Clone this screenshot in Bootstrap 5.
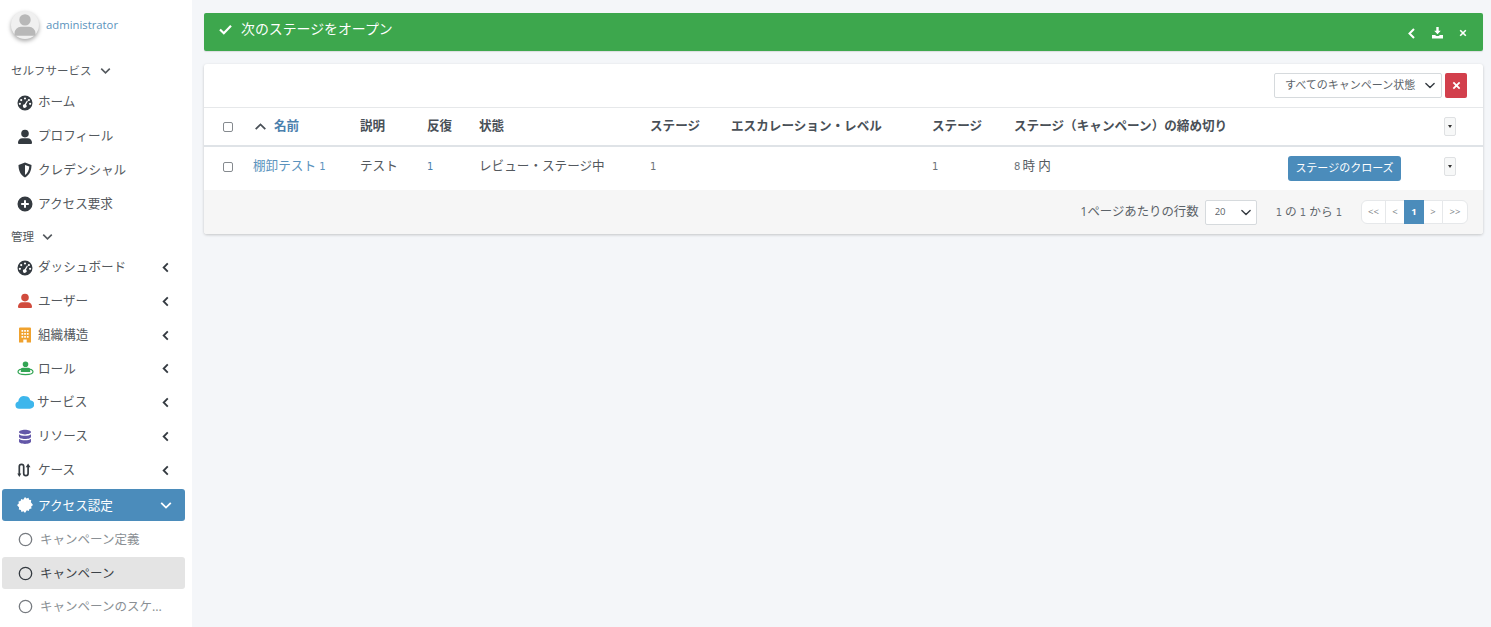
<!DOCTYPE html>
<html lang="ja">
<head>
<meta charset="utf-8">
<title>キャンペーン</title>
<link href="https://cdn.jsdelivr.net/npm/bootstrap@5.3.0/dist/css/bootstrap.min.css" rel="stylesheet">
<style>
html,body{height:627px;overflow:hidden}
body{background:#f4f6f9;color:#495057;font-family:"Open Sans","Noto Sans CJK JP",sans-serif;font-size:13px}
.shell{height:627px}
.side{width:192px;flex:none;background:#fff;overflow:hidden;height:627px}
.userbox{height:50px;padding:0 0 0 11px;gap:7px}
.avatar{width:28px;height:28px;border-radius:50%;background:#f0f0f0;box-shadow:0 2px 4px rgba(0,0,0,.35);flex:none}
.uname{color:#5b93bd;font-size:11.3px}
.sec{height:34px;padding:2px 0 0 11px;font-size:11.5px;color:#54595e;gap:8px}
.sec1{margin-top:4px;height:32px}
.sec2{height:29.5px;margin-top:0}
.mi{height:33.8px;padding:0 20px 0 18px;margin-right:7px;color:#54595e;font-size:12.6px}
.mi .ico{width:16px;height:16px;flex:none;margin:0 5px 0 -1px;color:#343a40}
.mi .ico-wide{width:19px;height:16px;margin:0 3px 0 -3px}
.mi .ico-role{width:17px;height:15px;margin:0 4px 0 -1px}
.mi .lbl{flex:1;white-space:nowrap}
.mi .chev{width:9px;height:11px;flex:none;margin-right:-5px;color:#343a40}
.mi-act{background:#4b8cbb;color:#fff;height:32px;margin:2px 7px 1px 2px;padding:0 13px 0 16px;border-radius:3px}
.mi-act .lbl{padding-top:2px}
.mi-act .ico{color:#fff}
.mi-act .chev{color:#fff;width:12px;height:9px;margin:0}
.mi-sub{padding-left:18px;color:#8a8f94;height:34px;font-size:12.5px}
.mi-sub .lbl{padding-top:3px}
.mi-sub .ico{width:15px;height:15px;margin:0 7px 0 0;color:#777b80}
.mi-cur{background:#e4e4e4;color:#3c4248;height:32px;margin:1px 7px 0 2px;padding-left:16px;border-radius:3px}
.mi-cur .ico{color:#343a40}
.mainpane{flex:1;padding:13px 8px 0 12px;min-width:0}
.banner{background:#3da74d;color:#fff;height:38px;border-radius:2px;padding:0 16px 6px 15px;font-size:13.9px;box-shadow:0 1px 1px rgba(0,0,0,.1)}
.banner .ck{width:13px;height:11px;margin-right:9px}
.tools{gap:15px;margin-top:8px}
.panel{background:#fff;border-radius:3px;margin-top:13px;box-shadow:0 1px 3px rgba(0,0,0,.2);overflow:hidden}
.tbar{height:44px;padding:0 16px 0 0;gap:3px;border-bottom:1px solid #e6e8ea}
.fsel{width:168px;height:25px;font-size:11px;padding:0 24px 0 10px;border-radius:2px;border-color:#d6dadd;color:#5c6369;background-position:right 4px center;background-size:14px 11px}
.xbtn{width:22px;height:25px;background:#d23f4c;border-radius:2px;padding:0;border:0}
.dtab{table-layout:fixed;width:1279px;margin:0;font-size:12.6px;color:#495057}
.dtab th{height:38px;padding:0 0 0 8px;border-bottom:2px solid #dfe3e7;font-weight:700;vertical-align:middle;white-space:nowrap;color:#495057}
.dtab td{height:44px;padding:0 0 4px 8px;border:0;vertical-align:middle;white-space:nowrap;color:#54595e}
.dtab .lnk{color:#5b93bd}
.dtab .lnkb{color:#4b80ad}
.dig{font-family:"DejaVu Sans",sans-serif;font-size:10px;color:#6c7278}
.dig-gap{margin-right:2px}
.lnk .dig{color:#5b93bd}
.dtab .lnkb .dig{color:#4b80ad}
.cb{width:10px;height:10px;border:1px solid #858a8f;border-radius:2px;display:block;margin-left:11px}
.cbtn{width:12px;height:19px;background:#f7f8f8;border:1px solid #dfe1e3;border-radius:2px;display:flex;align-items:center;justify-content:center;padding:0}
.cbtn i{border-top:3px solid #333;border-left:2px solid transparent;border-right:2px solid transparent}
.closebtn{background:#4b8cbb;color:#fff;border:0;border-radius:3px;height:25px;width:113px;font-size:11px;padding:0;margin-top:4px}
.pgfoot{height:44px;background:#f6f6f6;padding:0 15px 0 0;font-size:12.4px;color:#5c6369}
.pcount{font-size:11.7px}
.psel{width:52px;height:25px;font-size:9.5px;padding:0 18px 0 9px;border-radius:2px;border-color:#d6dadd;color:#5c6369;background-position:right 3px center;background-size:14px 11px;margin:0 19px 0 6px}
.pgs{margin:0 0 0 19px}
.pgs .page-link{height:24px;padding:0;display:flex;align-items:center;justify-content:center;font-size:9.5px;color:#7a8085;border-color:#e6e8ea;border-radius:0}
.pgs .page-item.active .page-link{background:#4b8cbb;border-color:#4b8cbb;color:#fff;font-weight:700}
</style>
</head>
<body>
<svg width="0" height="0" class="position-absolute">
<defs>
<symbol id="i-gauge" viewBox="0 0 16 16"><path fill-rule="evenodd" fill="currentColor" d="M8 .5a7.5 7.5 0 1 1 0 15 7.5 7.5 0 0 1 0-15ZM8 2.4a1.1 1.1 0 1 0 0 2.2 1.1 1.1 0 0 0 0-2.2ZM4.2 4a1.1 1.1 0 1 0 0 2.2 1.1 1.1 0 0 0 0-2.2ZM2.9 7.7a1.1 1.1 0 1 0 0 2.2 1.1 1.1 0 0 0 0-2.2ZM11.9 4a1.1 1.1 0 1 0 0 2.2 1.1 1.1 0 0 0 0-2.2ZM13.1 7.7a1.1 1.1 0 1 0 0 2.2 1.1 1.1 0 0 0 0-2.2ZM10 5.6 7.6 9.3a1.8 1.8 0 1 0 1.4.5L10.9 6Z"/></symbol>
<symbol id="i-user" viewBox="0 0 16 16"><path fill="currentColor" d="M8 .8a3.800 3.800 0 1 1 0 7.600A3.800 3.800 0 0 1 8 .8ZM5.300 9.200h5.400A4.300 4.300 0 0 1 15 13.500v.6a1 1 0 0 1-1 1H2a1 1 0 0 1-1-1v-.6A4.300 4.300 0 0 1 5.300 9.200Z"/></symbol>
<symbol id="i-shield" viewBox="0 0 16 16"><path fill-rule="evenodd" fill="currentColor" d="M8 .5 14.500 3c0 5.500-2 10-6.500 12.500C3.500 13 1.500 8.500 1.500 3ZM8 3v10c2.600-1.700 4-4.500 4.300-8.500Z"/></symbol>
<symbol id="i-plus" viewBox="0 0 16 16"><path fill-rule="evenodd" fill="currentColor" d="M8 .5a7.500 7.500 0 1 1 0 15 7.500 7.500 0 0 1 0-15ZM7 4.200v2.800H4.200v2H7v2.800h2V9h2.800V7H9V4.200Z"/></symbol>
<symbol id="i-build" viewBox="0 0 16 16"><path fill-rule="evenodd" fill="currentColor" d="M3 .5h10a1 1 0 0 1 1 1v14H9.700v-3H6.300v3H2v-14a1 1 0 0 1 1-1ZM4.500 3v1.700h1.700V3ZM7.200 3v1.700h1.700V3ZM9.900 3v1.700h1.700V3ZM4.500 6v1.700h1.700V6ZM7.200 6v1.700h1.700V6ZM9.900 6v1.700h1.700V6ZM4.500 9v1.700h1.700V9ZM7.200 9v1.700h1.700V9ZM9.900 9v1.700h1.700V9Z"/></symbol>
<symbol id="i-role" viewBox="0 0 18 16"><path fill="currentColor" d="M9 .5a3 3 0 1 1 0 6 3 3 0 0 1 0-6ZM6 7.200h6a2 2 0 0 1 2 2v2.500H4V9.200a2 2 0 0 1 2-2Z"/><ellipse cx="9" cy="11.500" rx="8" ry="3" fill="none" stroke="currentColor" stroke-width="1.300"/></symbol>
<symbol id="i-cloud" viewBox="0 0 20 16"><path fill="currentColor" d="M11 1a5.300 5.300 0 0 1 5 4 4.400 4.400 0 0 1-.4 9H4.300a3.900 3.900 0 0 1-.8-7.700A5.600 5.600 0 0 1 11 1Z"/></symbol>
<symbol id="i-db" viewBox="0 0 16 16"><path fill="currentColor" d="M8 .8c3.300 0 6 1 6 2.300S11.300 5.400 8 5.400 2 4.400 2 3.100 4.700.8 8 .8ZM2 5.200C3.200 6.200 5.500 6.700 8 6.700s4.800-.5 6-1.500v2.600c0 1.300-2.700 2.300-6 2.300s-6-1-6-2.300ZM2 9.700c1.200 1 3.500 1.500 6 1.500s4.800-.5 6-1.500v2.900c0 1.300-2.700 2.400-6 2.400s-6-1.100-6-2.400Z"/></symbol>
<symbol id="i-route" viewBox="0 0 16 16"><path fill="none" stroke="currentColor" stroke-width="1.700" d="M2.300 12V4.500a2.200 2.200 0 0 1 4.400 0v7a2.200 2.200 0 0 0 4.400 0V5"/><path fill="currentColor" d="M2.300 15 .3 11.500h4ZM11.100 1.500 13.500 5.300H8.700Z"/></symbol>
<symbol id="i-cert" viewBox="0 0 16 16"><path fill="currentColor" d="m8 0 1.500 1.400 2-.7.6 2 2.100.4-.3 2.100L16 8l-1.800 1.500.3 2.100-2.100.4-.6 2-2-.7L8 16l-1.500-1.700-2 .7-.6-2-2.100-.4.3-2.100L0 8l1.800-1.500-.3-2.100 2.100-.4.600-2 2 .7Z"/></symbol>
<symbol id="i-ring" viewBox="0 0 16 16"><circle cx="8" cy="8" r="6.600" fill="none" stroke="currentColor" stroke-width="1.400"/></symbol>
<symbol id="i-left" viewBox="0 0 9 12"><path fill="none" stroke="currentColor" stroke-width="2" d="M7 1.500 2.500 6 7 10.500"/></symbol>
<symbol id="i-down" viewBox="0 0 12 9"><path fill="none" stroke="currentColor" stroke-width="1.800" d="M1.200 1.800 6 6.600l4.800-4.800"/></symbol>
<symbol id="i-x" viewBox="0 0 10 10"><path fill="none" stroke="currentColor" stroke-width="2" d="m1.500 1.500 7 7m0-7-7 7"/></symbol>
</defs>
</svg>
<div class="shell d-flex">
<nav class="side">
  <div class="userbox d-flex align-items-center">
    <span class="avatar d-flex align-items-center justify-content-center"><svg width="24" height="24" viewBox="0 0 16 16" style="color:#b8b8b8"><use href="#i-user"/></svg></span>
    <span class="uname">administrator</span>
  </div>
  <div class="sec sec1 d-flex align-items-center">セルフサービス <svg width="11" height="8"><use href="#i-down"/></svg></div>
  <a class="mi d-flex align-items-center text-decoration-none"><svg class="ico"><use href="#i-gauge"/></svg><span class="lbl">ホーム</span></a>
  <a class="mi d-flex align-items-center text-decoration-none"><svg class="ico"><use href="#i-user"/></svg><span class="lbl">プロフィール</span></a>
  <a class="mi d-flex align-items-center text-decoration-none"><svg class="ico"><use href="#i-shield"/></svg><span class="lbl">クレデンシャル</span></a>
  <a class="mi d-flex align-items-center text-decoration-none"><svg class="ico"><use href="#i-plus"/></svg><span class="lbl">アクセス要求</span></a>
  <div class="sec sec2 d-flex align-items-center">管理 <svg width="11" height="8"><use href="#i-down"/></svg></div>
  <a class="mi d-flex align-items-center text-decoration-none"><svg class="ico"><use href="#i-gauge"/></svg><span class="lbl">ダッシュボード</span><svg class="chev"><use href="#i-left"/></svg></a>
  <a class="mi d-flex align-items-center text-decoration-none"><svg class="ico" style="color:#d14b3d"><use href="#i-user"/></svg><span class="lbl">ユーザー</span><svg class="chev"><use href="#i-left"/></svg></a>
  <a class="mi d-flex align-items-center text-decoration-none"><svg class="ico" style="color:#f0a22e"><use href="#i-build"/></svg><span class="lbl">組織構造</span><svg class="chev"><use href="#i-left"/></svg></a>
  <a class="mi d-flex align-items-center text-decoration-none"><svg class="ico ico-role" style="color:#32a554"><use href="#i-role"/></svg><span class="lbl">ロール</span><svg class="chev"><use href="#i-left"/></svg></a>
  <a class="mi d-flex align-items-center text-decoration-none"><svg class="ico ico-wide" style="color:#3db6ec"><use href="#i-cloud"/></svg><span class="lbl">サービス</span><svg class="chev"><use href="#i-left"/></svg></a>
  <a class="mi d-flex align-items-center text-decoration-none"><svg class="ico" style="color:#6357a8"><use href="#i-db"/></svg><span class="lbl">リソース</span><svg class="chev"><use href="#i-left"/></svg></a>
  <a class="mi d-flex align-items-center text-decoration-none"><svg class="ico"><use href="#i-route"/></svg><span class="lbl">ケース</span><svg class="chev"><use href="#i-left"/></svg></a>
  <a class="mi mi-act d-flex align-items-center text-decoration-none"><svg class="ico"><use href="#i-cert"/></svg><span class="lbl">アクセス認定</span><svg class="chev"><use href="#i-down"/></svg></a>
  <a class="mi mi-sub d-flex align-items-center text-decoration-none"><svg class="ico"><use href="#i-ring"/></svg><span class="lbl">キャンペーン定義</span></a>
  <a class="mi mi-sub mi-cur d-flex align-items-center text-decoration-none"><svg class="ico"><use href="#i-ring"/></svg><span class="lbl">キャンペーン</span></a>
  <a class="mi mi-sub d-flex align-items-center text-decoration-none"><svg class="ico"><use href="#i-ring"/></svg><span class="lbl">キャンペーンのスケ...</span></a>
</nav>
<main class="mainpane">
  <div class="banner d-flex align-items-center">
    <svg class="ck" viewBox="0 0 13 11"><path fill="none" stroke="#fff" stroke-width="2.200" d="m1 5.500 3.800 3.800L12 1.800"/></svg>
    <span class="flex-grow-1">次のステージをオープン</span>
    <span class="tools d-flex align-items-center">
      <svg width="9" height="13"><use href="#i-left"/></svg>
      <svg width="13" height="12" viewBox="0 0 13 12"><path fill="#fff" d="M5.300 0h2.400v3.800h2.100L6.500 7.300 3.200 3.800h2.100ZM1 8h3l1.500 1h2L9 8h3v3.500H1Z"/></svg>
      <svg width="8" height="8"><use href="#i-x"/></svg>
    </span>
  </div>
  <section class="panel">
    <div class="tbar d-flex align-items-center justify-content-end">
      <select class="form-select fsel"><option>すべてのキャンペーン状態</option></select>
      <button class="btn xbtn d-flex align-items-center justify-content-center text-white" type="button" aria-label="閉じる"><svg width="9" height="9"><use href="#i-x"/></svg></button>
    </div>
    <table class="table dtab">
      <colgroup><col style="width:41px"><col style="width:107px"><col style="width:67px"><col style="width:52px"><col style="width:171px"><col style="width:81px"><col style="width:201px"><col style="width:82px"><col style="width:274px"><col style="width:156px"><col style="width:47px"></colgroup>
      <thead>
        <tr>
          <th><span class="cb"></span></th>
          <th><span class="d-inline-flex align-items-center"><svg width="13" height="9" style="transform:rotate(180deg);margin:0 7px 0 1px"><use href="#i-down"/></svg><span class="lnkb">名前</span></span></th>
          <th>説明</th><th>反復</th><th>状態</th><th>ステージ</th><th>エスカレーション・レベル</th><th>ステージ</th><th>ステージ（キャンペーン）の締め切り</th><th></th>
          <th><button class="cbtn" type="button" aria-label="メニュー"><i></i></button></th>
        </tr>
      </thead>
      <tbody>
        <tr>
          <td><span class="cb"></span></td>
          <td><span class="lnk">棚卸テスト <span class="dig">1</span></span></td>
          <td>テスト</td>
          <td class="lnkb"><span class="dig">1</span></td>
          <td>レビュー・ステージ中</td>
          <td><span class="dig">1</span></td>
          <td></td>
          <td><span class="dig">1</span></td>
          <td><span class="dig dig-gap">8</span>時 内</td>
          <td><button class="closebtn" type="button">ステージのクローズ</button></td>
          <td><button class="cbtn" type="button" aria-label="メニュー"><i></i></button></td>
        </tr>
      </tbody>
    </table>
    <div class="pgfoot d-flex align-items-center justify-content-end">
      <span>1ページあたりの行数</span>
      <select class="form-select psel"><option>20</option></select>
      <span class="pcount"><span class="dig">1</span> の <span class="dig">1</span> から <span class="dig">1</span></span>
      <ul class="pagination pgs">
        <li class="page-item" style="width:25px"><a class="page-link">&lt;&lt;</a></li>
        <li class="page-item" style="width:19px"><a class="page-link">&lt;</a></li>
        <li class="page-item active" style="width:19px"><a class="page-link">1</a></li>
        <li class="page-item" style="width:19px"><a class="page-link">&gt;</a></li>
        <li class="page-item" style="width:25px"><a class="page-link">&gt;&gt;</a></li>
      </ul>
    </div>
  </section>
</main>
</div>
</body>
</html>
